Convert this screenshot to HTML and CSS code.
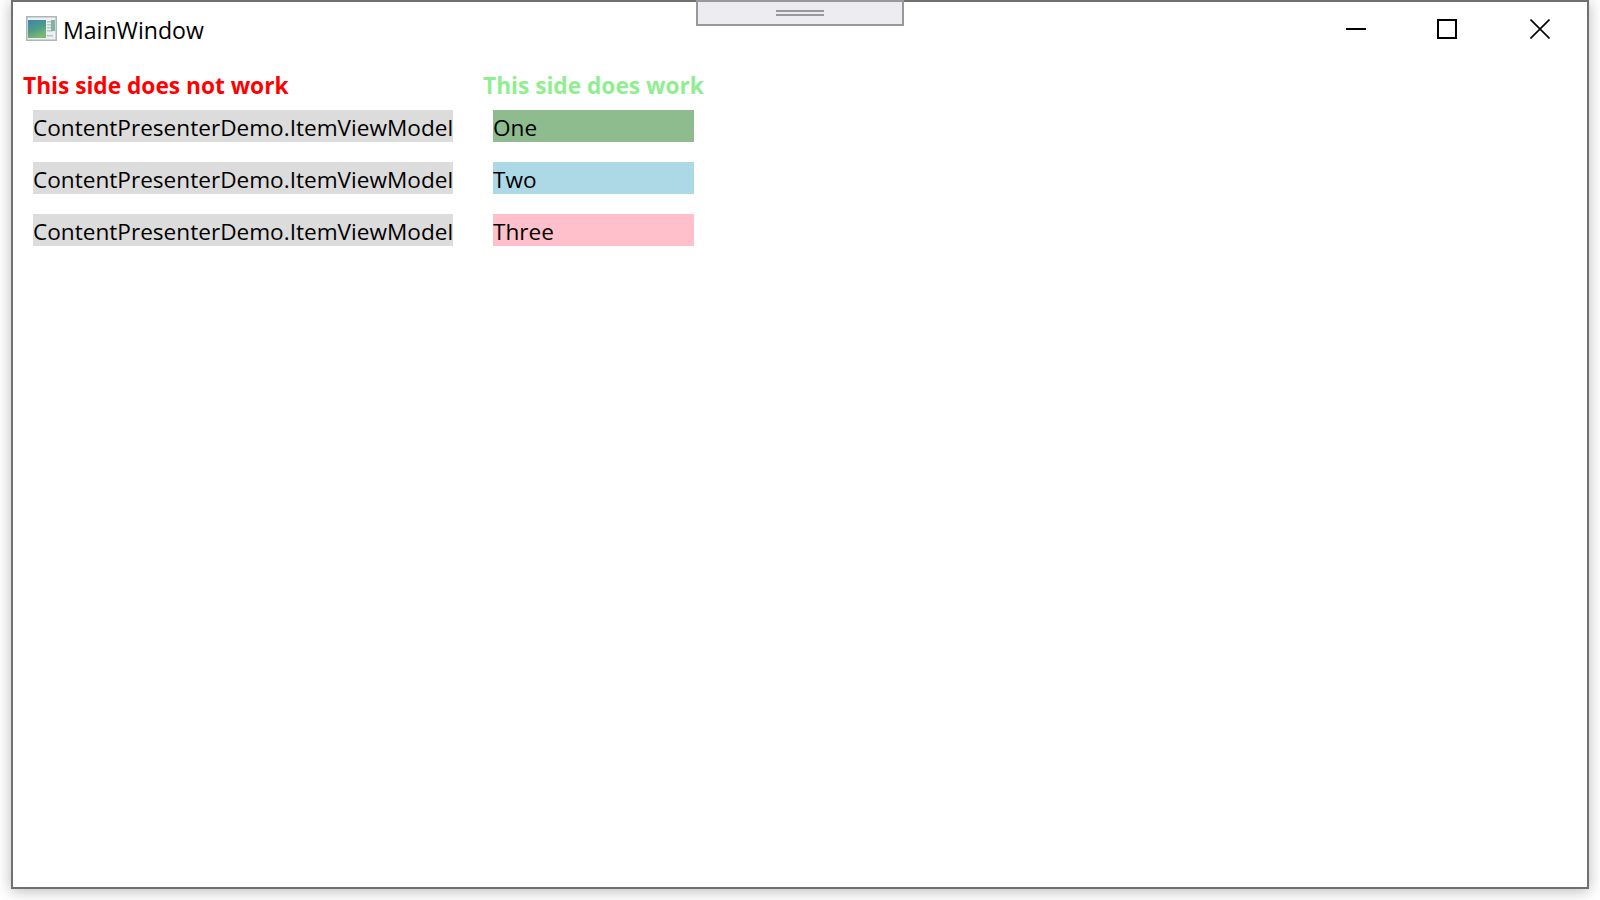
FILE: index.html
```html
<!DOCTYPE html>
<html lang="en">
<head>
    <meta charset="UTF-8">
    <meta name="viewport" content="width=device-width, initial-scale=1.0">
    <title>MainWindow</title>
    <link rel="stylesheet" href="styles.css">
</head>
<body>
    <div class="window">
        <div class="titlebar">
            <div class="title">
                <svg class="app-icon" width="31" height="25" viewBox="0 0 31 25">
                    <defs>
                        <linearGradient id="pane" x1="0.1" y1="0" x2="0.5" y2="1">
                            <stop offset="0" stop-color="#3f87a8"/>
                            <stop offset="0.55" stop-color="#4f9c86"/>
                            <stop offset="1" stop-color="#7dbb72"/>
                        </linearGradient>
                    </defs>
                    <rect x="0.75" y="0.75" width="29.5" height="23.5" fill="#eef1f3" stroke="#aeb4b8" stroke-width="1.5"/>
                    <rect x="2" y="4" width="18" height="18" fill="url(#pane)"/>
                    <rect x="21" y="5" width="6" height="1.5" fill="#b9c2c6"/>
                    <rect x="21" y="8" width="6" height="1.5" fill="#b9c2c6"/>
                    <rect x="21" y="11" width="6" height="1.5" fill="#b9c2c6"/>
                    <rect x="21" y="14" width="6" height="1.5" fill="#b9c2c6"/>
                    <rect x="21" y="19" width="6" height="1.5" fill="#b9c2c6"/>
                    <rect x="25" y="4" width="4" height="11" fill="#7db59d"/>
                </svg>
                <span>MainWindow</span>
            </div>
            <div class="controls">
                <svg class="control" width="20" height="20" viewBox="0 0 20 20">
                    <path d="M0 10H20" stroke="#000" stroke-width="2" fill="none"/>
                </svg>
                <svg class="control" width="20" height="20" viewBox="0 0 20 20">
                    <rect x="1" y="1" width="18" height="18" stroke="#000" stroke-width="2" fill="none"/>
                </svg>
                <svg class="control control-close" width="20" height="20" viewBox="0 0 20 20">
                    <path d="M0.5 0.5L19.5 19.5M19.5 0.5L0.5 19.5" stroke="#000" stroke-width="1.6" fill="none"/>
                </svg>
            </div>
        </div>

        <div class="columns">
            <div class="column column-left">
                <h2 class="heading heading-bad">This side does not work</h2>
                <div class="item item-gray">ContentPresenterDemo.ItemViewModel</div>
                <div class="item item-gray">ContentPresenterDemo.ItemViewModel</div>
                <div class="item item-gray">ContentPresenterDemo.ItemViewModel</div>
            </div>
            <div class="column column-right">
                <h2 class="heading heading-good">This side does work</h2>
                <div class="item item-green">One</div>
                <div class="item item-blue">Two</div>
                <div class="item item-pink">Three</div>
            </div>
        </div>
    </div>

    <div class="grip">
        <div class="grip-line"></div>
        <div class="grip-line"></div>
    </div>
</body>
</html>
```

FILE: styles.css
```css
* {
    margin: 0;
    padding: 0;
    box-sizing: border-box;
    font-family: 'Open Sans', 'Noto Sans', sans-serif;
}

html, body {
    width: 1600px;
    height: 900px;
    overflow: hidden;
    background: #fff;
}

body {
    padding: 0 11px 11px 11px;
}

.window {
    height: 889px;
    background: #fff;
    border: 2px solid #707070;
    box-shadow: 0 2px 14px rgba(0, 0, 0, 0.28);
}

.titlebar {
    height: 66px;
    display: flex;
    justify-content: space-between;
    align-items: flex-start;
}

.title {
    display: flex;
    align-items: flex-start;
    gap: 6px;
    padding: 13px 0 0 13px;
    font-size: 23.1px;
    line-height: 30px;
    color: #000;
}

.app-icon {
    display: block;
    margin-top: 1px;
}

.controls {
    display: flex;
    gap: 71px;
    padding: 17px 37px 0 0;
}

.control {
    display: block;
}

.control-close {
    margin-left: 2px;
}

.columns {
    display: flex;
    gap: 30px;
    padding-left: 10px;
}

.heading {
    font-size: 22.7px;
    font-weight: 700;
    line-height: 36px;
    margin-bottom: 6px;
    white-space: nowrap;
}

.heading-bad {
    color: #ff0000;
}

.heading-good {
    color: #90ee90;
}

.column-left {
    width: 430px;
}

.column-right {
    width: 222px;
}

.item {
    height: 32px;
    margin: 0 0 20px 10px;
    font-size: 22.6px;
    line-height: 36px;
    color: #000;
    white-space: nowrap;
}

.item-gray {
    width: 420px;
    background: #dcdcdc;
}

.item-green {
    width: 201px;
    background: #8fbc8f;
}

.item-blue {
    width: 201px;
    background: #add8e6;
}

.item-pink {
    width: 201px;
    background: #ffc0cb;
}

.grip {
    position: absolute;
    left: 696px;
    top: 0;
    width: 208px;
    height: 26px;
    background: #edecf1;
    border: 2px solid #999;
    display: flex;
    flex-direction: column;
    align-items: center;
    gap: 2px;
    padding-top: 8px;
}

.grip-line {
    width: 48px;
    height: 2px;
    background: #999;
}
```
